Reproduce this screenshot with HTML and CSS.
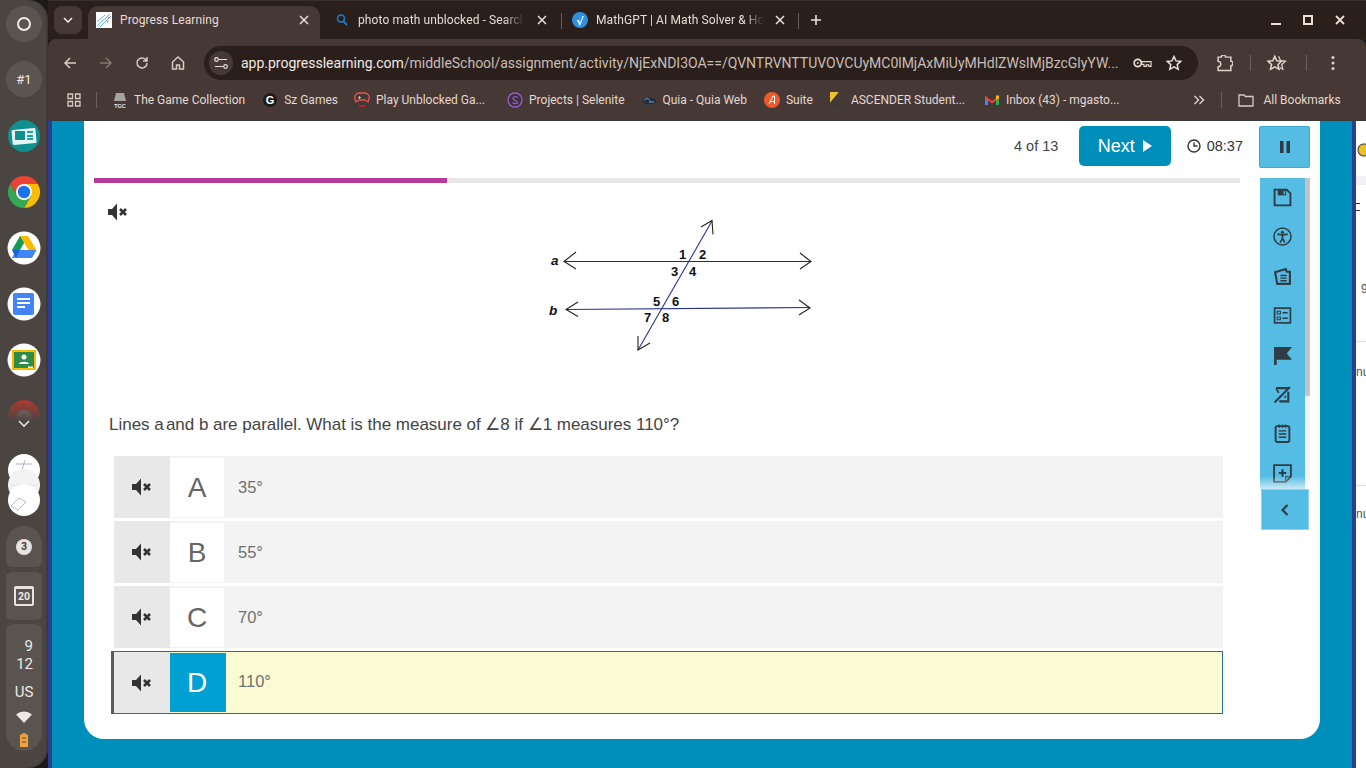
FILE: index.html
```html
<!DOCTYPE html>
<html lang="en">
<head>
<meta charset="utf-8">
<title>Progress Learning</title>
<link rel="stylesheet" href="styles.css">
</head>
<body>
<svg class="defs" width="0" height="0" aria-hidden="true">
  <symbol id="mute" viewBox="0 0 20 18">
    <path d="M0 6h4l5-5.500v17l-5-5.500H0z" fill="currentColor"/>
    <path d="M12 6l6 6M18 6l-6 6" stroke="currentColor" stroke-width="2.600" fill="none"/>
  </symbol>
  <symbol id="close" viewBox="0 0 10 10">
    <path d="M1 1l8 8M9 1l-8 8" stroke="currentColor" stroke-width="1.500" fill="none"/>
  </symbol>
</svg>

<aside class="shelf">
  <div class="shelf-btn"><span class="ring"></span></div>
  <div class="shelf-btn desk">#1</div>
  <div class="apps">
    <svg class="app" viewBox="0 0 36 36"><circle cx="18" cy="18" r="16" fill="#0f8f90"/><rect x="6" y="11" width="24" height="15" rx="1.500" fill="#e6f4f3" transform="rotate(-5 18 18)"/><rect x="9" y="13" width="10" height="9" fill="#0f8f90"/><path d="M21 14h6M21 18h6M21 21h6" stroke="#19a5a5" stroke-width="2"/></svg>
    <svg class="app" viewBox="0 0 36 36"><path d="M4.140 10A16 16 0 0 1 31.860 10H18L11.070 22z" fill="#ea4335"/><path d="M31.860 10A16 16 0 0 1 18 34L24.930 22 18 10z" fill="#fbbc04"/><path d="M18 34A16 16 0 0 1 4.140 10L11.070 22H24.930z" fill="#34a853"/><circle cx="18" cy="18" r="8" fill="#fff"/><circle cx="18" cy="18" r="6.200" fill="#1a73e8"/></svg>
    <svg class="app" viewBox="0 0 36 36"><circle cx="18" cy="18" r="16.500" fill="#fff"/><path d="M14 6h8l-8 14H6z" fill="#0f9d58"/><path d="M22 6l8.500 14h-8L14 6z" fill="#ffba00"/><path d="M10 20h20.500l-4.500 8H6z" fill="#4285f4"/><path d="M6 20h8l-4 8H10z" fill="#1967d2"/></svg>
    <svg class="app" viewBox="0 0 36 36"><circle cx="18" cy="18" r="16.500" fill="#fff"/><rect x="7" y="7" width="21" height="22" rx="2" fill="#4285f4"/><path d="M11 13h13M11 17h13M11 21h8" stroke="#fff" stroke-width="2"/></svg>
    <svg class="app" viewBox="0 0 36 36"><circle cx="18" cy="18" r="16.500" fill="#fff"/><rect x="6" y="8" width="24" height="20" fill="#fbbc04"/><rect x="8" y="10" width="20" height="16" fill="#2f8b45"/><circle cx="18" cy="15" r="2.500" fill="#fff"/><path d="M13 22c0-3 10-3 10 0z" fill="#fff"/><rect x="22" y="24.500" width="5" height="1.500" fill="#fff"/></svg>
    <div class="app-faded">
      <svg class="app" viewBox="0 0 36 36"><circle cx="18" cy="18" r="16" fill="#a33a33"/><circle cx="18" cy="20" r="8" fill="#8b7470"/></svg>
      <svg class="more" viewBox="0 0 12 8"><path d="M1 1l5 5 5-5" stroke="#e6e2df" stroke-width="1.600" fill="none"/></svg>
    </div>
  </div>
  <div class="stack">
    <svg class="thumb" viewBox="0 0 32 32"><circle cx="16" cy="16" r="16" fill="#fff"/><path d="M8 10h16M17 6l-3 10M5 19h10" stroke="#9aa0cc" stroke-width=".8"/></svg>
    <svg class="thumb" viewBox="0 0 32 32"><circle cx="16" cy="16" r="16" fill="#f3f3f3"/><path d="M3 16h26" stroke="#ddd"/><path d="M10 17h12" stroke="#e8e69a" stroke-width="1.500"/></svg>
    <svg class="thumb" viewBox="0 0 32 32"><circle cx="16" cy="16" r="16" fill="#fff"/><path d="M3 22l8-8 7 4-8 8z" fill="none" stroke="#bbb"/></svg>
  </div>
  <div class="pill pill-note"><span class="badge">3</span></div>
  <div class="pill pill-cal"><span class="cal">20</span></div>
  <div class="pill pill-tray">
    <div class="clock"><span class="hour">9</span><span>12</span></div>
    <div class="ime">US</div>
    <svg class="wifi" viewBox="0 0 16 12"><path d="M0 3.500a12 12 0 0 1 16 0L8 12z" fill="#eee9e5"/></svg>
    <svg class="battery" viewBox="0 0 8 14"><path d="M2.500 0h3v1.500H8V14H0V1.500h2.500z" fill="#f2a23c"/><path d="M2 5h4M2 9h4" stroke="#4d4743" stroke-width="1.200"/></svg>
  </div>
</aside>

<div class="window">
  <header class="tabstrip">
    <div class="tabs-menu"><svg width="10" height="6" viewBox="0 0 10 6"><path d="M1 1l4 4 4-4" stroke="#eee" stroke-width="1.500" fill="none"/></svg></div>
    <div class="tab tab-active">
      <svg class="fav" viewBox="0 0 16 16"><rect width="16" height="16" fill="#fff"/><path d="M1 14L14 2M4 15L15 4M1 10L9 3" stroke="#5fb4de" stroke-width="1"/><rect x="11" y="9" width="1.500" height="1.500" fill="#d46ab5"/><rect x="12" y="5" width="1.500" height="1.500" fill="#d46ab5"/></svg>
      <span class="tab-title">Progress Learning</span>
      <svg class="x"><use href="#close"/></svg>
    </div>
    <div class="tab tab-two">
      <svg class="fav" viewBox="0 0 16 16"><circle cx="7" cy="6.500" r="3.500" fill="none" stroke="#1a7fd4" stroke-width="1.600"/><path d="M9.500 9.500l3.500 3.500" stroke="#1a7fd4" stroke-width="1.800"/></svg>
      <span class="tab-title fade">photo math unblocked - Search</span>
      <svg class="x"><use href="#close"/></svg>
    </div>
    <span class="tab-sep"></span>
    <div class="tab tab-three">
      <svg class="fav" viewBox="0 0 16 16"><circle cx="8" cy="8" r="8" fill="#2f8fe0"/><text class="root-ic" x="8" y="12.500">√</text></svg>
      <span class="tab-title fade">MathGPT | AI Math Solver &amp; Ho</span>
      <svg class="x"><use href="#close"/></svg>
    </div>
    <span class="tab-sep"></span>
    <svg class="plus" viewBox="0 0 12 12"><path d="M6 1v10M1 6h10" stroke="#eadfd9" stroke-width="1.600"/></svg>
    <div class="win-controls">
      <svg viewBox="0 0 12 12"><path d="M1 10h10" stroke="#f0ddd3" stroke-width="2"/></svg>
      <svg viewBox="0 0 12 12"><rect x="2" y="2" width="8" height="8" fill="none" stroke="#f0ddd3" stroke-width="2"/></svg>
      <svg viewBox="0 0 12 12"><path d="M2 2l8 8M10 2l-8 8" stroke="#f0ddd3" stroke-width="1.800"/></svg>
    </div>
  </header>

  <nav class="toolbar">
    <svg class="nav-ic" viewBox="0 0 16 16"><path d="M14 8H3M8 3L3 8l5 5" stroke="#d9cbc4" stroke-width="1.500" fill="none"/></svg>
    <svg class="nav-ic" viewBox="0 0 16 16"><path d="M2 8h11M8 3l5 5-5 5" stroke="#85776f" stroke-width="1.500" fill="none"/></svg>
    <svg class="nav-ic" viewBox="0 0 16 16"><path d="M13 8a5 5 0 1 1-1.500-3.600L13 6M13 2v4H9" stroke="#d9cbc4" stroke-width="1.500" fill="none"/></svg>
    <svg class="nav-ic" viewBox="0 0 16 16"><path d="M2.500 14V7L8 2l5.500 5v7h-4v-4h-3v4z" stroke="#d9cbc4" stroke-width="1.500" fill="none"/></svg>
    <div class="omnibox">
      <span class="site-info"><svg width="14" height="12" viewBox="0 0 14 12"><path d="M5 2.500h8M1 9.500h8" stroke="#eadfd9" stroke-width="1.200"/><circle cx="2.500" cy="2.500" r="1.800" fill="none" stroke="#eadfd9" stroke-width="1.200"/><circle cx="11.500" cy="9.500" r="1.800" fill="none" stroke="#eadfd9" stroke-width="1.200"/></svg></span>
      <span class="url"><span class="host">app.progresslearning.com</span>/middleSchool/assignment/activity/NjExNDI3OA==/QVNTRVNTTUVOVCUyMC0lMjAxMiUyMHdlZWslMjBzcGlyYW...</span>
      <svg class="omni-ic key" viewBox="0 0 20 12"><circle cx="5" cy="6" r="3.800" fill="none" stroke="#e8dbd4" stroke-width="1.800"/><circle cx="5" cy="6" r="1" fill="#e8dbd4"/><path d="M9 4.500h10v5h-2.500V8H14v1.500h-2.500V7.500H9z" fill="none" stroke="#e8dbd4" stroke-width="1.200"/></svg>
      <svg class="omni-ic star" viewBox="0 0 16 16"><path d="M8 1.500l2 4.400 4.800.5-3.600 3.200 1 4.700L8 11.900l-4.200 2.400 1-4.700L1.200 6.400 6 5.900z" fill="none" stroke="#eadfd9" stroke-width="1.500"/></svg>
    </div>
    <svg class="tool-ic ext" viewBox="0 0 16 16"><path d="M2 2h3a2 2 0 0 1 4 0h5v4a2 2 0 0 1 0 4v4.500H2V11a2.500 2.500 0 0 0 0-5z" fill="none" stroke="#e0d3cc" stroke-width="1.400"/></svg>
    <span class="tool-sep"></span>
    <svg class="tool-ic list" viewBox="0 0 18 16"><path d="M7 2l1.800 4 4.400.4-3.300 2.900.9 4.300L7 11.400l-3.800 2.200.9-4.300L.8 6.400 5.200 6z" fill="none" stroke="#e0d3cc" stroke-width="1.400"/><path d="M10.500 2l1.700 3.900 4.400.5-3.300 2.900.9 4.300-2.700-1.500" fill="none" stroke="#e0d3cc" stroke-width="1.100"/></svg>
    <span class="tool-sep"></span>
    <svg class="tool-ic dots" viewBox="0 0 4 16"><circle cx="2" cy="2.500" r="1.500" fill="#e0d3cc"/><circle cx="2" cy="8" r="1.500" fill="#e0d3cc"/><circle cx="2" cy="13.500" r="1.500" fill="#e0d3cc"/></svg>
  </nav>

  <nav class="bookmarks">
    <svg class="apps-ic" viewBox="0 0 14 14"><path d="M1 1h4.500v4.500H1zM8.500 1H13v4.500H8.500zM1 8.500h4.500V13H1zM8.500 8.500H13V13H8.500z" fill="none" stroke="#d9cbc4" stroke-width="1.300"/></svg>
    <span class="bm-sep"></span>
    <a class="bm bm-wide"><svg class="bm-ic" viewBox="0 0 16 16"><path d="M4 1h8l2 8H2z" fill="#a9a4a0"/><text class="tgc" x="8" y="15.500">TGC</text></svg>The Game Collection</a>
    <a class="bm"><svg class="bm-ic" viewBox="0 0 16 16"><circle cx="8" cy="8" r="7" fill="#1e1a18"/><text class="g-ic" x="8" y="12">G</text></svg>Sz Games</a>
    <a class="bm bm-long"><svg class="bm-ic" viewBox="0 0 16 16"><path d="M5 1h6a4.500 4.500 0 0 1 4 6l-1 3-3-2H5l-3 2-1-3a4.500 4.500 0 0 1 4-6z" fill="none" stroke="#e2574c" stroke-width="1.300"/><path d="M4 5.500h3M5.500 4v3M11 4l.01.01M12 6l.01.01" stroke="#e8a89a"/><path d="M5 14h6" stroke="#c22" stroke-width="1.500"/></svg>Play Unblocked Ga...</a>
    <a class="bm"><svg class="bm-ic" viewBox="0 0 16 16"><circle cx="8" cy="8" r="7" fill="#3c2f40" stroke="#9a5fc4" stroke-width="1.300"/><path d="M10.500 5.500C9 4 5.500 4.500 6 6.500S11 9 10.500 10.500 7 12 5.500 10.500" fill="none" stroke="#9a5fc4" stroke-width="1.100"/></svg>Projects | Selenite</a>
    <a class="bm bm-wide"><svg class="bm-ic" viewBox="0 0 16 16"><ellipse cx="8" cy="9" rx="7" ry="3.500" fill="#1f3044"/><path d="M3 8.500c2-3 5-2 6 0M8 10h5" stroke="#7fa6c9" fill="none"/></svg>Quia - Quia Web</a>
    <a class="bm"><svg class="bm-ic" viewBox="0 0 16 16"><circle cx="8" cy="8" r="8" fill="#ea5a2a"/><path d="M5 12L9 4h1.500v8M6.500 9.500h4" stroke="#fff" fill="none"/></svg>Suite</a>
    <a class="bm bm-xl"><svg class="bm-ic" viewBox="0 0 16 16"><path d="M1 0h9L1 11z" fill="#eec033"/><path d="M1 16V11L10 0v16z" fill="#3f3835"/></svg>ASCENDER Student...</a>
    <a class="bm"><svg class="bm-ic" viewBox="0 0 16 16"><path d="M1 4v9h3V7z" fill="#4285f4"/><path d="M15 4v9h-3V7z" fill="#34a853"/><path d="M1 3.500L8 9l7-5.500v2.800L8 11.500 1 6.300z" fill="#ea4335"/><path d="M12 3.500h3V6l-3 2z" fill="#fbbc04"/></svg>Inbox (43) - mgasto...</a>
    <svg class="bm-more" viewBox="0 0 12 10"><path d="M1.500 1l4 4-4 4M6.500 1l4 4-4 4" stroke="#e0d3cc" stroke-width="1.400" fill="none"/></svg>
    <span class="bm-sep bm-sep-end"></span>
    <a class="bm bm-all"><svg class="bm-ic" viewBox="0 0 16 16"><path d="M1 3h5l1.500 1.500H15V14H1z" fill="none" stroke="#d9cbc4" stroke-width="1.300"/></svg>All Bookmarks</a>
  </nav>

  <main class="page">
    <section class="card">
      <div class="activity">
        <div class="topbar">
          <span class="count">4 of 13</span>
          <button class="next">Next <svg class="next-tri" viewBox="0 0 9 12"><path d="M0 0l9 6-9 6z" fill="#fff"/></svg></button>
          <span class="timer"><svg class="clock-ic" viewBox="0 0 14 14"><circle cx="7" cy="7" r="6" fill="none" stroke="#333" stroke-width="1.400"/><path d="M7 3.500V7h3.500" fill="none" stroke="#333" stroke-width="1.400"/></svg>08:37</span>
        </div>
        <div class="progress"><div class="progress-fill" style="width:30.8%"></div></div>
        <div class="stem">
          <svg class="mute mute-q"><use href="#mute"/></svg>
          <svg class="figure" width="300" height="150" viewBox="0 0 300 150">
            <g fill="none" stroke-width="1.100">
              <path d="M34 51.500h246" stroke="#1c2a78"/>
              <path d="M37 99.500l243-2" stroke="#2a3590"/>
              <path d="M182 11L108 140" stroke="#2a3590"/>
              <path d="M46 42l-12 9.500 12 7.500M270 43l11 8.500-11 7.500M48 92l-12 7.500 12 7M269 90l11 8-11 7M171 17l11-6.500 1 14M108 126v14l12-7" stroke="#222"/>
            </g>
            <g class="fig-num">
              <text x="149" y="49">1</text><text x="169" y="49">2</text>
              <text x="141" y="66">3</text><text x="159" y="66">4</text>
              <text x="123" y="96">5</text><text x="142" y="96">6</text>
              <text x="114" y="112">7</text><text x="132" y="112">8</text>
            </g>
            <text class="fig-var" x="21" y="55">a</text>
            <text class="fig-var" x="19" y="105">b</text>
          </svg>
        </div>
        <p class="question">Lines <span class="tight">a and</span> b are parallel. What is the measure of ∠8 if ∠1 measures 110°?</p>
        <div class="options">
          <div class="option">
            <div class="opt-audio"><svg class="mute"><use href="#mute"/></svg></div>
            <div class="opt-letter">A</div>
            <div class="opt-text">35°</div>
          </div>
          <div class="option">
            <div class="opt-audio"><svg class="mute"><use href="#mute"/></svg></div>
            <div class="opt-letter">B</div>
            <div class="opt-text">55°</div>
          </div>
          <div class="option">
            <div class="opt-audio"><svg class="mute"><use href="#mute"/></svg></div>
            <div class="opt-letter">C</div>
            <div class="opt-text">70°</div>
          </div>
          <div class="option option-selected">
            <div class="opt-audio"><svg class="mute"><use href="#mute"/></svg></div>
            <div class="opt-letter">D</div>
            <div class="opt-text">110°</div>
          </div>
        </div>
      </div>
      <aside class="side">
        <button class="pause"><svg viewBox="0 0 12 14" width="12" height="14"><path d="M1 1h3.500v12H1zM7.500 1H11v12H7.500z" fill="#2f3b45"/></svg></button>
        <div class="tools">
          <div class="tool-list">
            <svg viewBox="0 0 18 18"><path d="M2 1.500h11l3.500 3.500v11.500H1.500V1.500z" fill="none" stroke="#2f3b45" stroke-width="1.800"/><path d="M4.500 2h8v5h-8z" fill="#2f3b45"/><path d="M10 3h1.500v3H10z" fill="#55bde3"/></svg>
            <svg viewBox="0 0 20 20"><circle cx="10" cy="10" r="9" fill="none" stroke="#2f3b45" stroke-width="1.600"/><circle cx="10" cy="5.500" r="1.600" fill="#2f3b45"/><path d="M4.500 7.500c3.500 1 7.500 1 11 0M10 9v3M10 12l-2.500 4.500M10 12l2.500 4.500" fill="none" stroke="#2f3b45" stroke-width="1.700"/></svg>
            <svg viewBox="0 0 18 18"><path d="M2 5l10-3 1 2.500H16V16H4z" fill="none" stroke="#2f3b45" stroke-width="2"/><path d="M7 8h6M7 10.500h6M7 13h6" stroke="#2f3b45" stroke-width="1.300"/></svg>
            <svg viewBox="0 0 18 18"><rect x="1.500" y="2" width="15" height="14" fill="none" stroke="#2f3b45" stroke-width="1.600"/><path d="M4 5h3v2.500H4zM4 10.500h3V13H4z" fill="none" stroke="#2f3b45"/><path d="M9 6.500h5M9 11.500h5" stroke="#2f3b45" stroke-width="1.400"/></svg>
            <svg viewBox="0 0 18 18"><path d="M1 1h17l-5 6 5 6H3.500v5H1z" fill="#2f3b45"/></svg>
            <svg viewBox="0 0 18 18"><path d="M3 3h11M1.500 16.500L16 2" fill="none" stroke="#2f3b45" stroke-width="2"/><path d="M3 3.500l2.500 4" stroke="#2f3b45" stroke-width="1.600"/><path d="M6 15.500h8.500V6.500" fill="none" stroke="#2f3b45" stroke-width="2"/><path d="M10 12h2.500V9.500z" fill="#2f3b45"/></svg>
            <svg viewBox="0 0 18 18"><rect x="2.500" y="2" width="13" height="15" rx="1.500" fill="none" stroke="#2f3b45" stroke-width="1.800"/><path d="M5.500 6.500h7M5.500 9.500h7M5.500 12.500h7M6 .5v3M9 .5v3M12 .5v3" stroke="#2f3b45" stroke-width="1.300"/></svg>
            <svg viewBox="0 0 18 18"><path d="M1 1h16v11l-5 5H1z" fill="none" stroke="#2f3b45" stroke-width="1.700"/><path d="M9 5v7M5.500 8.500h7" stroke="#2f3b45" stroke-width="2"/><path d="M12 17v-5h5" fill="none" stroke="#2f3b45"/></svg>
          </div>
          <div class="tool-track"><div class="tool-thumb"></div></div>
        </div>
        <button class="collapse"><svg viewBox="0 0 8 12" width="8" height="12"><path d="M6.500 1L1.500 6l5 5" stroke="#2f3b45" stroke-width="2.200" fill="none"/></svg></button>
      </aside>
    </section>
    <div class="page-right"></div>
    <div class="stripe"></div>
    <div class="peek">
      <div class="peek-logo"></div>
      <div class="peek-band"></div>
      <div class="peek-mark"></div>
      <div class="peek-row peek-nine">9</div>
      <div class="peek-row peek-nu">nu</div>
      <div class="peek-row peek-nu2">nu</div>
    </div>
  </main>
</div>
</body>
</html>
```

FILE: styles.css
```css
* { box-sizing: border-box; }
html, body { margin: 0; height: 100%; }
body {
  width: 1366px;
  height: 768px;
  overflow: hidden;
  display: flex;
  background: #1c1a19;
  font-family: "Liberation Sans", Arial, sans-serif;
}
.defs { position: absolute; }
svg { display: block; flex: none; }

/* shelf */
.shelf {
  width: 48px;
  height: 768px;
  flex: none;
  background: #4b4541;
  box-shadow: inset -2px 0 0 #3f3a37;
  border-radius: 0 20px 20px 0;
  display: flex;
  flex-direction: column;
  align-items: center;
  padding-top: 6px;
  color: #eee9e5;
  font-family: Roboto, sans-serif;
}
.shelf-btn {
  width: 36px;
  height: 36px;
  border-radius: 50%;
  background: #5b5551;
  display: flex;
  align-items: center;
  justify-content: center;
  font-size: 13px;
}
.desk { margin-top: 19px; }
.ring { width: 14px; height: 14px; border: 2px solid #f0ebe7; border-radius: 50%; }
.apps { margin-top: 21px; display: flex; flex-direction: column; gap: 20px; align-items: center; }
.app { width: 36px; height: 36px; }
.app-faded { position: relative; width: 36px; height: 36px; }
.app-faded::after {
  content: "";
  position: absolute;
  inset: 4px 0 -2px;
  background: linear-gradient(#4b454100, #4b4541 55%);
}
.more { position: absolute; left: 12px; top: 22px; width: 12px; height: 8px; z-index: 1; }
.stack { margin-top: 20px; display: flex; flex-direction: column; align-items: center; }
.thumb { width: 32px; height: 32px; }
.thumb + .thumb { margin-top: -17px; }
.pill {
  width: 36px;
  background: #5a5450;
  border-radius: 6px;
  display: flex;
  align-items: center;
  justify-content: center;
}
.pill-note { height: 41px; margin-top: 10px; border-radius: 18px 18px 6px 6px; }
.badge {
  width: 16px; height: 16px; border-radius: 50%;
  background: #e8e3df; color: #3d3835;
  font-size: 10px; font-weight: 700;
  display: flex; align-items: center; justify-content: center;
}
.pill-cal { height: 48px; margin-top: 5px; }
.cal {
  width: 20px; height: 20px;
  border: 2px solid #e8e3df;
  border-top-width: 3px;
  border-radius: 2px;
  font-size: 10.500px; font-weight: 700;
  display: flex; align-items: center; justify-content: center;
}
.pill-tray {
  height: 127px;
  margin-top: 4px;
  border-radius: 6px 6px 18px 18px;
  flex-direction: column;
  justify-content: flex-start;
  padding-top: 13px;
}
.clock { display: flex; flex-direction: column; align-items: flex-end; width: 24px; font-size: 15px; line-height: 18px; margin-left: -6px; }
.ime { margin-top: 10px; font-size: 15px; line-height: 18px; }
.wifi { width: 16px; height: 12px; margin-top: 10px; }
.battery { width: 8px; height: 14px; margin-top: 10px; }

/* window */
.window { width: 1318px; flex: none; display: flex; flex-direction: column; height: 768px; }

.tabstrip {
  height: 40px;
  flex: none;
  background: #2a1f1b;
  border-top: 1px solid #38302c;
  display: flex;
  align-items: flex-start;
  color: #e8dcd6;
  font-family: Roboto, sans-serif;
  font-size: 12px;
}
.tabs-menu {
  width: 28px; height: 28px;
  margin: 5px 0 0 6px;
  background: #463935;
  border-radius: 8px;
  display: flex; align-items: center; justify-content: center;
}
.tab { height: 34px; margin-top: 5px; padding-bottom: 6px; display: flex; align-items: center; flex: none; position: relative; }
.tab-active { width: 232px; margin-left: 6px; background: #463935; border-radius: 10px 10px 0 0; padding-left: 8px; }
.tab-two { width: 241px; padding-left: 14px; }
.tab-three { width: 236px; padding-left: 10px; }
.fav { width: 16px; height: 16px; }
.root-ic { font: 700 11px "DejaVu Sans", sans-serif; text-anchor: middle; fill: #fff; }
.tab-title { margin-left: 8px; white-space: nowrap; width: 179px; letter-spacing: .1px; }
.tab-two .tab-title { width: 166px; overflow: hidden; }
.tab-three .tab-title { width: 168px; overflow: hidden; }
.fade { -webkit-mask-image: linear-gradient(90deg, #000 88%, transparent); mask-image: linear-gradient(90deg, #000 88%, transparent); }
.x { width: 10px; height: 10px; margin-left: 13px; color: #eee3dd; }
.tab-active .x { margin-left: 0; }
.tab-three .x { margin-left: 11px; }
.tab-sep { width: 1px; height: 16px; margin-top: 12px; background: #6a5d57; flex: none; }
.plus { width: 12px; height: 12px; margin: 13px 0 0 11px; }
.win-controls { margin-left: auto; margin-top: 13px; margin-right: 20px; display: flex; gap: 20px; }
.win-controls svg { width: 12px; height: 12px; }

.toolbar {
  height: 41px;
  flex: none;
  background: #463935;
  display: flex;
  align-items: center;
  padding: 7px 0 0 14px;
  border-radius: 8px 8px 0 0;
  margin-top: -1px;
  position: relative;
}
.nav-ic { width: 16px; height: 16px; margin-right: 20px; }
.omnibox {
  width: 994px;
  height: 34px;
  margin-left: -2px;
  border-radius: 17px;
  background: #2a1f1b;
  display: flex;
  align-items: center;
  padding-left: 5px;
  color: #c9bdb6;
  font-family: Roboto, sans-serif;
  font-size: 14px;
  white-space: nowrap;
}
.site-info {
  width: 24px; height: 24px; border-radius: 50%;
  background: #463935;
  display: flex; align-items: center; justify-content: center;
  flex: none;
}
.url { margin-left: 8px; width: 876px; letter-spacing: -.01px; }
.host { color: #f2e9e4; }
.omni-ic { flex: none; }
.key { width: 19px; height: 12px; margin-left: 16px; }
.star { width: 16px; height: 16px; margin-left: 14px; }
.tool-ic { flex: none; }
.ext { width: 17px; height: 17px; margin-left: 18px; }
.tool-sep { width: 1px; height: 16px; background: #6e615a; flex: none; margin-left: 17px; }
.list { width: 20px; height: 18px; margin-left: 16px; }
.list + .tool-sep { margin-left: 19px; }
.dots { width: 4px; height: 16px; margin-left: 24px; }

.bookmarks {
  height: 40px;
  flex: none;
  background: #463935;
  display: flex;
  align-items: center;
  padding: 0 0 1px 19px;
  color: #e4d8d1;
  font-family: Roboto, sans-serif;
  font-size: 12px;
  white-space: nowrap;
}
.apps-ic { width: 14px; height: 14px; }
.bm-sep { width: 1px; height: 16px; background: #6e615a; flex: none; margin: 0 15px; }
.bm { display: flex; align-items: center; gap: 6px; margin-right: 16px; flex: none; }
.bm-wide { margin-right: 17px; }
.bm-xl { margin-right: 19px; }
.bm-long { margin-right: 22px; }
.bm-ic { width: 16px; height: 16px; }
.tgc { font: 700 5.500px "Liberation Sans", Arial, sans-serif; text-anchor: middle; fill: #e8e8e8; }
.g-ic { font: 700 11px "Liberation Sans", Arial, sans-serif; text-anchor: middle; fill: #fff; }
.bm-more { width: 12px; height: 10px; margin-left: 58px; }
.bm-sep-end { margin: 0 16px; }
.bm-all { margin: 0; gap: 9px; }

/* page */
.page {
  flex: 1;
  min-height: 0;
  display: flex;
  background: #008fbb;
  border-left: 4px solid #2a3f8f;
  border-top: 1px solid #3a3a3a;
  padding-left: 32px;
}
.card {
  width: 1236px;
  height: 618px;
  flex: none;
  background: #fff;
  border-radius: 0 0 20px 20px;
  padding-left: 10px;
  display: flex;
  gap: 19px;
  color: #444;
}
.activity { width: 1146px; flex: none; }
.topbar { height: 57px; display: flex; align-items: flex-start; margin-right: -3px; }
.count { margin: 16px 0 0 920px; font-size: 14.500px; line-height: 18px; color: #444; width: 65px; }
.next {
  width: 92px; height: 40px;
  margin-top: 5px;
  border: 0; border-radius: 5px;
  background: #008fbb; color: #fff;
  font: 18px "Liberation Sans", Arial, sans-serif;
  display: flex; align-items: center; justify-content: center; gap: 8px;
  padding: 0;
}
.next-tri { width: 9px; height: 12px; }
.timer { display: flex; align-items: center; gap: 6px; margin: 16px 0 0 16px; font-size: 14.500px; line-height: 18px; color: #333; }
.clock-ic { width: 14px; height: 14px; }
.progress { height: 5px; background: #e8e8e8; }
.progress-fill { height: 100%; background: #b83a9e; }
.stem { height: 230px; display: flex; align-items: flex-start; }
.mute { width: 20px; height: 18px; color: #333; }
.mute-q { margin: 20px 0 0 14px; }
.figure { margin: 27px 0 0 402px; }
.fig-num { font: 700 13px "Liberation Sans", Arial, sans-serif; fill: #111; }
.fig-var { font: italic 700 13.500px "Liberation Sans", Arial, sans-serif; fill: #111; }
.question { margin: 1px 0 0 15px; font-size: 17px; line-height: 22px; color: #444; height: 42px; letter-spacing: -.02px; }
.tight { word-spacing: -2.500px; }
.options { margin-left: 20px; width: 1109px; display: flex; flex-direction: column; gap: 3px; }
.option { height: 62px; background: #f3f3f3; display: flex; align-items: stretch; position: relative; }
.opt-audio { width: 56px; background: #e8e8e8; display: flex; align-items: center; justify-content: center; flex: none; }
.opt-letter {
  width: 54px; margin: 2px 0 1px; background: #fff; color: #666;
  font-size: 28px; display: flex; align-items: center; justify-content: center; flex: none;
}
.opt-text { padding-left: 14px; font-size: 16.500px; color: #707070; display: flex; align-items: center; }
.option-selected {
  height: 63px;
  background: #fbfbd3;
  border: 1px solid #1f6f9f;
  border-left: 0;
}
.option-selected::before {
  content: "";
  position: absolute;
  left: -3px; top: -1px; bottom: -1px;
  width: 3px;
  background: #5a5a5a;
}
.option-selected .opt-letter { width: 56px; margin: 1px 0; background: #00a0d2; color: #fff; padding-right: 2px; }
.option-selected .opt-text { padding-left: 12px; padding-bottom: 2px; }

/* side tools */
.side { width: 51px; flex: none; display: flex; flex-direction: column; align-items: flex-start; }
.pause {
  width: 51px; height: 42px; margin-top: 5px; padding: 0;
  border: 1px solid #3ea9d1; border-radius: 2px;
  background: #55bde3;
  display: flex; align-items: center; justify-content: center;
}
.tools { margin: 10px 0 0 1px; height: 311px; width: 50px; display: flex; position: relative; }
.tools::after {
  content: "";
  position: absolute;
  left: 0; bottom: 0;
  width: 50px; height: 13px;
  background: linear-gradient(#ffffff00, #ffffffb0);
}
.tool-list {
  width: 45px;
  background: #55bde3;
  display: flex; flex-direction: column; align-items: center;
  padding-top: 10px; gap: 20.400px;
  overflow: hidden;
}
.tool-list svg { width: 19px; height: 19px; }
.tool-track { width: 5px; background: #f4f4f4; }
.tool-thumb { height: 218px; background: #c4c4c4; }
.collapse {
  width: 48px; height: 41px; margin-left: 2px; padding: 0;
  border: 1px solid #8fd3ec;
  background: #55bde3;
  display: flex; align-items: center; justify-content: center;
}

.page-right { width: 32px; flex: none; }
.stripe { width: 4px; flex: none; background: #2a3f8f; }
.peek { width: 10px; flex: none; background: #fff; overflow: hidden; font-size: 12px; color: #555; white-space: nowrap; }
.peek-logo { height: 14px; margin-top: 22px; background: radial-gradient(circle at 8px 7px, #e8c020 5px, #3a3a3a 6px, #fff 7px); }
.peek-band { height: 9px; margin-top: 19px; background: #f0f0f5; }
.peek-mark { width: 4px; height: 8px; margin-top: 18px; border-top: 1px solid #333; border-bottom: 1px solid #333; }
.peek-row { overflow: hidden; }
.peek-nine { height: 16px; margin-top: 71px; padding-left: 5px; }
.peek-nu { height: 144px; margin-top: 43px; border-top: 1px solid #ddd; padding-top: 23px; }
.peek-nu2 { height: 60px; border-top: 1px solid #ddd; padding-top: 21px; }
```
